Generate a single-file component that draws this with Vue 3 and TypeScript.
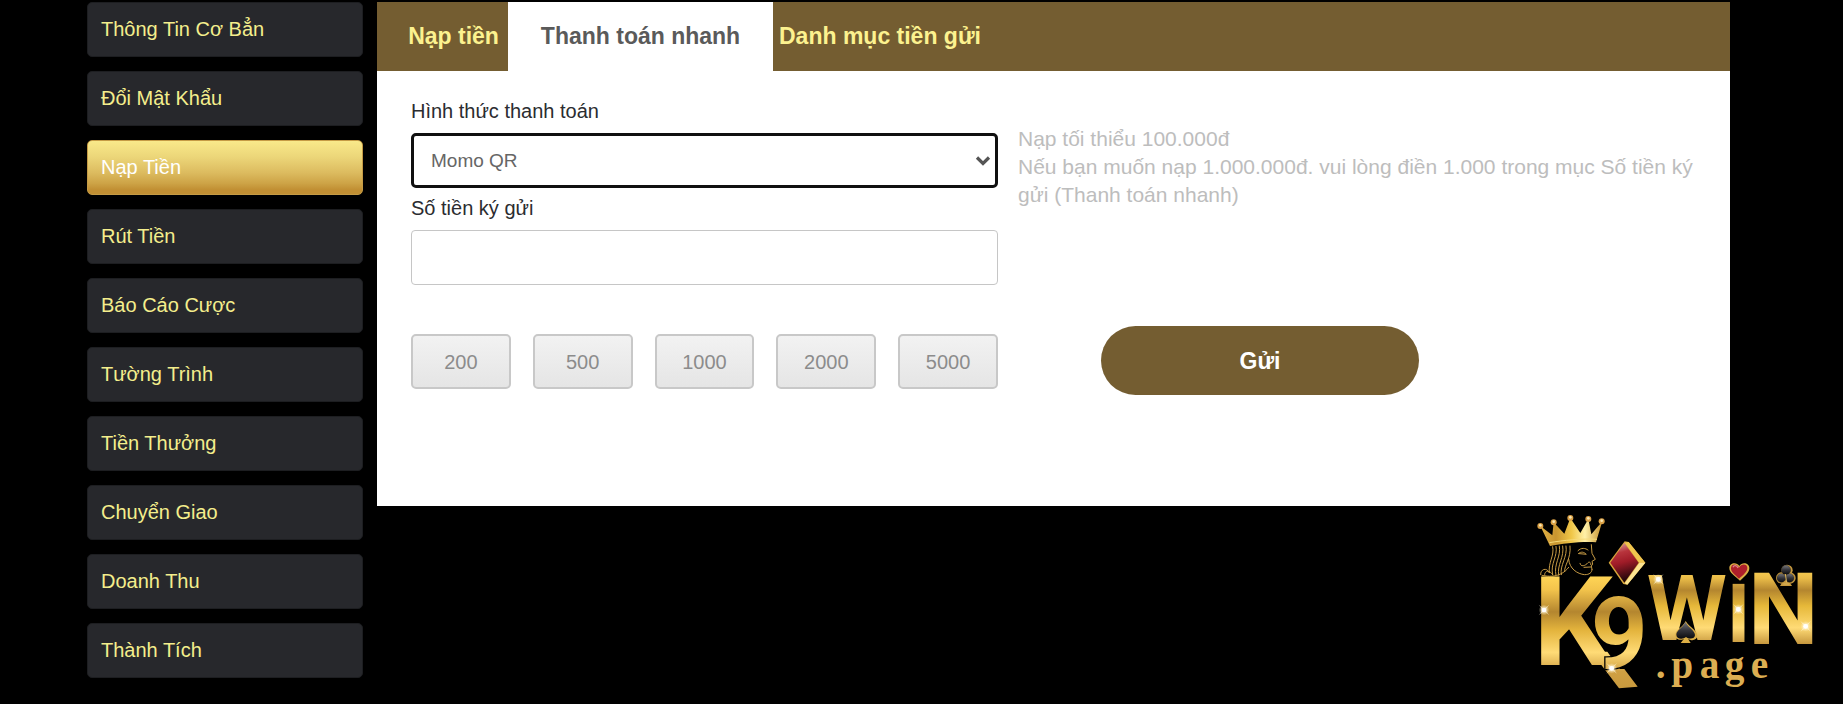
<script setup lang="ts">
import { ref } from 'vue'

const menu: string[] = [
  'Thông Tin Cơ Bẳn',
  'Đổi Mật Khẩu',
  'Nạp Tiền',
  'Rút Tiền',
  'Báo Cáo Cược',
  'Tường Trình',
  'Tiền Thưởng',
  'Chuyển Giao',
  'Doanh Thu',
  'Thành Tích',
]
const activeMenu = ref('Nạp Tiền')

const tabs: string[] = ['Nạp tiền', 'Thanh toán nhanh', 'Danh mục tiền gửi']
const activeTab = ref('Thanh toán nhanh')

const method = ref('momo')
const amount = ref('')
const presets: number[] = [200, 500, 1000, 2000, 5000]

const sparkles = [
  { x: 415, y: 238 },
  { x: 72, y: 330 },
  { x: 275, y: 505 },
  { x: 655, y: 328 },
  { x: 857, y: 379 },
]
const crownBalls = [
  { x: 61, y: 78 },
  { x: 101, y: 67 },
  { x: 151, y: 54 },
  { x: 205, y: 57 },
  { x: 245, y: 64 },
]
</script>

<template>
  <div class="page">
    <nav class="sidebar" aria-label="Tài khoản">
      <a
        v-for="item in menu"
        :key="item"
        href="#"
        class="item"
        :class="{ active: item === activeMenu }"
        @click.prevent="activeMenu = item"
      >{{ item }}</a>
    </nav>

    <main class="panel">
      <div class="tabs" role="tablist">
        <button
          v-for="tab in tabs"
          :key="tab"
          type="button"
          role="tab"
          class="tab"
          :class="{ active: tab === activeTab }"
          :aria-selected="tab === activeTab"
          @click="activeTab = tab"
        >{{ tab }}</button>
      </div>

      <form class="form" @submit.prevent>
        <div class="fields">
          <label for="method">Hình thức thanh toán</label>
          <div class="select-wrap">
            <select id="method" v-model="method" class="control select">
              <option value="momo">Momo QR</option>
            </select>
            <svg class="chevron" viewBox="0 0 16 12" aria-hidden="true">
              <path d="M2 2.5 L8 8.5 L14 2.5" fill="none" stroke="#555" stroke-width="3.2" />
            </svg>
          </div>
          <label for="amount">Số tiền ký gửi</label>
          <input id="amount" v-model="amount" class="control" type="text" />
        </div>

        <div class="hint">
          <p>Nạp tối thiểu 100.000đ</p>
          <p>Nếu bạn muốn nạp 1.000.000đ. vui lòng điền 1.000 trong mục Số tiền ký gửi (Thanh toán nhanh)</p>
        </div>

        <div class="presets">
          <button
            v-for="value in presets"
            :key="value"
            type="button"
            class="preset"
            @click="amount = String(value)"
          >{{ value }}</button>
        </div>

        <button type="submit" class="submit">Gửi</button>
      </form>
    </main>

    <svg class="brand" viewBox="0 0 969 612" role="img" aria-label="K9WIN.page">
      <defs>
        <linearGradient id="goldK" gradientUnits="userSpaceOnUse" x1="0" y1="228" x2="0" y2="565">
          <stop offset="0" stop-color="#ffd556" />
          <stop offset="0.12" stop-color="#f3c44c" />
          <stop offset="0.32" stop-color="#b4862f" />
          <stop offset="0.48" stop-color="#e3b33c" />
          <stop offset="0.68" stop-color="#ffdb76" />
          <stop offset="0.85" stop-color="#d0a043" />
          <stop offset="1" stop-color="#c99a3e" />
        </linearGradient>
        <linearGradient id="goldW" gradientUnits="userSpaceOnUse" x1="0" y1="200" x2="0" y2="435">
          <stop offset="0" stop-color="#ffd556" />
          <stop offset="0.15" stop-color="#e9bb48" />
          <stop offset="0.3" stop-color="#b4862f" />
          <stop offset="0.5" stop-color="#e6b839" />
          <stop offset="0.78" stop-color="#ffdb76" />
          <stop offset="1" stop-color="#c3933a" />
        </linearGradient>
        <linearGradient id="crown" x1="0" y1="0" x2="1" y2="0">
          <stop offset="0" stop-color="#e2b345" />
          <stop offset="0.25" stop-color="#c99530" />
          <stop offset="0.5" stop-color="#f0c647" />
          <stop offset="0.72" stop-color="#fff0a8" />
          <stop offset="1" stop-color="#c4912d" />
        </linearGradient>
        <linearGradient id="ruby" x1="0" y1="0" x2="0.2" y2="1">
          <stop offset="0" stop-color="#e3b5b5" />
          <stop offset="0.3" stop-color="#b8343c" />
          <stop offset="0.55" stop-color="#a01c28" />
          <stop offset="1" stop-color="#22050a" />
        </linearGradient>
        <linearGradient id="coal" x1="0" y1="0" x2="0" y2="1">
          <stop offset="0" stop-color="#77777d" />
          <stop offset="0.5" stop-color="#34343a" />
          <stop offset="1" stop-color="#0b0b0e" />
        </linearGradient>
        <radialGradient id="glow">
          <stop offset="0" stop-color="#fff" />
          <stop offset="0.35" stop-color="#fff6dd" stop-opacity="0.8" />
          <stop offset="1" stop-color="#fff0c0" stop-opacity="0" />
        </radialGradient>
      </defs>

      <!-- king's hair and profile -->
      <g fill="none" stroke="#c79b45" stroke-width="3" stroke-linecap="round">
        <path d="M98 140 C104 168 84 186 88 218 M108 139 C114 170 90 190 98 224" />
        <path d="M118 138 C124 170 100 192 108 226 M128 138 C134 172 110 194 116 226" />
        <path d="M138 138 C144 170 118 196 124 224 M150 138 C154 176 132 196 134 214" />
        <path d="M88 218 C80 200 60 208 62 224 M98 224 C88 208 72 212 74 226" />
        <path d="M66 226 C86 230 122 234 146 202" />
        <path d="M146 178 C148 206 172 222 194 224 C208 224 216 218 216 208" />
        <path d="M214 134 L216 160 L226 178 L216 184 L218 192 L214 198 L216 208" />
        <path d="M174 152 C184 142 196 144 204 150 M176 160 C184 154 192 156 198 162 Z" />
        <path d="M180 190 C182 202 196 198 204 188 C208 184 214 188 212 194 M192 202 L212 201" />
      </g>
      <!-- crown -->
      <path
        d="M61 78 L90 138 C130 130 186 124 228 127 L247 64 L214 103 L205 57 L181 99 L151 54 L133 101 L101 67 L97 106 Z"
        fill="url(#crown)"
      />
      <path d="M88 128 C130 121 186 115 231 118" fill="none" stroke="#f6da7a" stroke-width="3" />
      <circle v-for="b in crownBalls" :key="b.x" :cx="b.x" :cy="b.y" r="9" fill="#d9a046" />
      <circle v-for="b in crownBalls" :key="-b.x" :cx="b.x" :cy="b.y - 2" r="4" fill="#f8e8b8" />

      <path d="M214 455 L262 455 L300 507 L313 507 L353 560 L297 565 Z" fill="url(#goldK)" />
      <text class="brand-word">
        <tspan x="40" y="494" font-size="375" fill="url(#goldK)">K</tspan>
        <tspan x="212" y="504" font-size="298" fill="url(#goldK)" stroke="#000" stroke-width="8" paint-order="stroke">9</tspan>
        <tspan x="380" y="420" font-size="275" fill="url(#goldW)">W</tspan>
        <tspan x="620" y="427" font-size="242" fill="url(#goldW)">I</tspan>
        <tspan x="684" y="432" font-size="300" fill="url(#goldW)">N</tspan>
      </text>

      <!-- diamond -->
      <path d="M314 124 L326 126 L376 188 L322 254 L310 252 L266 188 Z" fill="#d9a83b" />
      <path d="M326 126 L376 188 L358 188 L314 128 Z" fill="#f0c54e" />
      <path d="M376 188 L322 254 L314 250 L358 188 Z" fill="#fbe391" />
      <path d="M313 129 L356 188 L313 248 L271 188 Z" fill="url(#ruby)" />

      <!-- heart -->
      <path d="M660 242 C642 226 628 218 628 204 C628 188 650 184 658 198 C666 184 688 188 688 204 C688 218 676 228 660 242 Z" fill="#dcae45" />
      <path d="M657 236 C644 224 632 215 633 204 C634 191 650 190 657 203 C664 190 682 191 682 204 C682 215 670 225 657 236 Z" fill="#ae1f2b" />
      <path d="M639 202 C642 194 650 196 654 204" fill="none" stroke="#dd8087" stroke-width="4" />

      <!-- club -->
      <g fill="#c99b3f">
        <circle cx="801" cy="211" r="17" />
        <circle cx="785" cy="234" r="17" />
        <circle cx="810" cy="234" r="17" />
        <path d="M794 236 L802 236 L816 258 L780 258 Z" />
      </g>
      <g fill="url(#coal)" stroke="#111" stroke-width="1">
        <circle cx="798" cy="210" r="14" />
        <circle cx="784" cy="234" r="13" />
        <circle cx="809" cy="234" r="13" />
      </g>
      <path d="M796 222 L800 248 M790 252 L808 252" stroke="#d9b35a" stroke-width="3" fill="none" />

      <!-- spade -->
      <path d="M497 363 C508 382 533 392 532 408 C531 421 514 424 504 416 L512 429 L482 429 L492 416 C480 424 466 418 466 405 C466 390 488 382 497 363 Z" fill="#dcae45" />
      <path d="M496 366 C506 384 525 392 525 405 C525 417 508 419 498 411 C486 420 469 416 469 404 C469 391 488 384 496 366 Z" fill="url(#coal)" />

      <g v-for="s in sparkles" :key="s.x" :transform="`translate(${s.x} ${s.y})`">
        <circle r="16" fill="url(#glow)" />
        <path d="M-16 -16 L0 -4 L16 -16 L4 0 L16 16 L0 4 L-16 16 L-4 0 Z" fill="#fff6dc" fill-opacity="0.6" />
        <circle r="7" fill="#fff" />
      </g>

      <text class="brand-suffix" x="407 454 539 614 692" y="535">.page</text>
    </svg>
  </div>
</template>

<style>
html,
body {
  background: #000;
}
</style>

<style scoped>
.page {
  position: relative;
  display: flex;
  align-items: flex-start;
  gap: 14px;
  box-sizing: border-box;
  min-height: 100vh;
  padding: 2px 113px 24px 87px;
  background: #000;
  font-family: "Liberation Sans", Arial, sans-serif;
  font-size: 20px;
  line-height: 28px;
}

.sidebar {
  display: flex;
  flex: 0 0 276px;
  flex-direction: column;
  gap: 14px;
}

.item {
  box-sizing: border-box;
  min-height: 55px;
  padding: 12px 13px;
  border: 1px solid #1d1e21;
  border-radius: 5px;
  background: #27282c;
  color: #f4ee8c;
  line-height: 28px;
  text-decoration: none;
}

.item.active {
  border-color: #c59b45;
  background: linear-gradient(#f9e98a 0%, #ecd679 30%, #dcbb5f 60%, #cda346 80%, #c18f33 92%);
  color: #fff;
}

.panel {
  flex: 1;
  min-width: 0;
  background: #fff;
}

.tabs {
  display: flex;
  height: 69px;
  padding-left: 22px;
  background: #745d31;
}

.tab {
  padding: 0 6px 2px;
  border: 0;
  background: none;
  color: #fcf28f;
  font: bold 23px/28px "Liberation Sans", Arial, sans-serif;
}

.tab:first-child {
  min-width: 109px;
}

.tab.active {
  min-width: 265px;
  background: #fff;
  color: #5a5a5a;
}

.form {
  display: grid;
  grid-template-columns: minmax(0, 587fr) minmax(0, 686fr);
  align-items: start;
  column-gap: 20px;
  row-gap: 41px;
  padding: 20px 26px 111px 34px;
}

.fields {
  display: flex;
  flex-direction: column;
}

.fields label {
  padding: 6px 0 8px;
  color: #2b2c30;
}

.select-wrap {
  position: relative;
  display: flex;
}

.control {
  box-sizing: border-box;
  width: 100%;
  height: 55px;
  padding: 0 20px;
  border: 1px solid #c6c6c6;
  border-radius: 4px;
  background: #fff;
  color: #666;
  font: 19px/28px "Liberation Sans", Arial, sans-serif;
}

.select {
  padding: 0 17px;
  border: 3px solid #101010;
  border-radius: 5px;
  appearance: none;
}

.chevron {
  position: absolute;
  top: 22px;
  right: 7px;
  width: 16px;
  height: 12px;
  pointer-events: none;
}

.hint {
  padding-top: 34px;
  color: #bdbdbd;
  font-size: 21px;
}

.hint p {
  margin: 0;
}

.presets {
  display: flex;
  gap: 22px;
  padding-top: 8px;
}

.preset {
  flex: 1;
  height: 55px;
  padding: 0;
  border: 2px solid #c8c8c8;
  border-radius: 5px;
  background: linear-gradient(#f2f2f2, #e5e5e5);
  color: #8c8c8c;
  font: 20px/28px "Liberation Sans", Arial, sans-serif;
}

.submit {
  width: 318px;
  height: 69px;
  margin-left: 83px;
  border: 0;
  border-radius: 35px;
  background: #745d31;
  color: #fff;
  font: bold 23px/28px "Liberation Sans", Arial, sans-serif;
}

.brand {
  position: absolute;
  right: 0;
  bottom: 0;
  width: 323px;
  height: 204px;
}

.brand-word {
  font-family: Roboto, "Liberation Sans", sans-serif;
  font-weight: 700;
}

.brand-suffix {
  fill: #dcae52;
  font: bold 118px "Liberation Serif", "Times New Roman", serif;
}
</style>
